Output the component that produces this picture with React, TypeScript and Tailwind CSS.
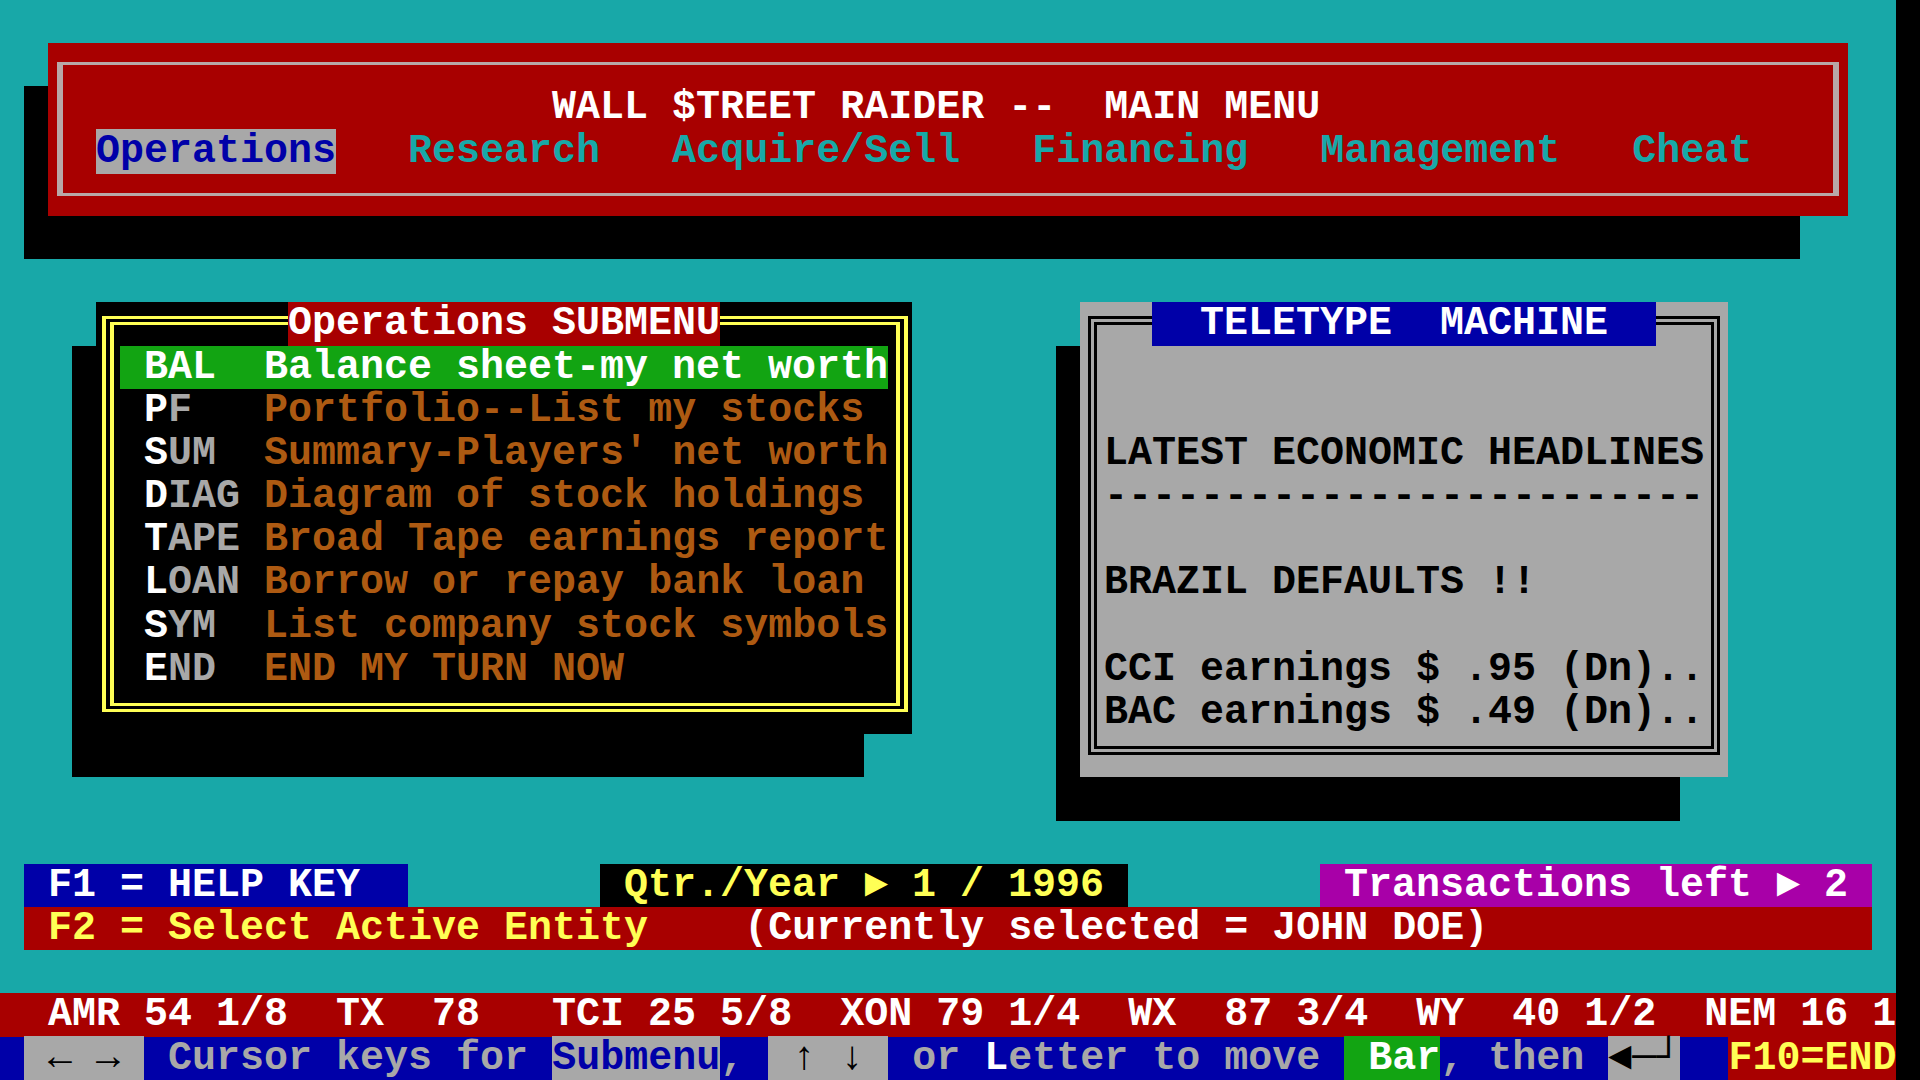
import React from "react";

// one text cell = 24px x 43.2px, screen is 79 cols x 25 rows
type Seg = [string, string];

function Line({ segs, className = "" }: { segs: Seg[]; className?: string }) {
  return (
    <div className={`whitespace-pre ${className}`}>
      {segs.map(([t, c], i) => (
        <span key={i} className={c}>
          {t}
        </span>
      ))}
    </div>
  );
}

const subItems: [string, string][] = [
  ["BAL", "Balance sheet-my net worth"],
  ["PF", "Portfolio--List my stocks"],
  ["SUM", "Summary-Players' net worth"],
  ["DIAG", "Diagram of stock holdings"],
  ["TAPE", "Broad Tape earnings report"],
  ["LOAN", "Borrow or repay bank loan"],
  ["SYM", "List company stock symbols"],
  ["END", "END MY TURN NOW"],
];

const headlines = [
  "LATEST ECONOMIC HEADLINES",
  "-------------------------",
  "",
  "BRAZIL DEFAULTS !!",
  "",
  "CCI earnings $ .95 (Dn)..",
  "BAC earnings $ .49 (Dn)..",
];

function MainMenu() {
  return (
    <>
      <div className="col-start-2 col-end-[76] row-start-3 row-end-7 bg-black" />
      <div className="col-start-3 col-end-[78] row-start-2 row-end-6 bg-[#a80000] grid grid-cols-[repeat(75,24px)] grid-rows-[repeat(4,43.2px)]">
        <div className="col-span-full row-span-full mt-[19px] mb-[20px] mx-[9px] border-x-[6px] border-y-[3px] border-[#b8a8a8]" />
        <div className="col-span-full row-start-2 whitespace-pre text-white">
          {"                     WALL $TREET RAIDER --  MAIN MENU"}
        </div>
        <Line
          className="col-span-full row-start-3 text-[#18a8a8]"
          segs={[
            ["  ", ""],
            ["Operations", "bg-[#a8a8a8] text-[#0000a8]"],
            ["   Research   Acquire/Sell   Financing   Management   Cheat", ""],
          ]}
        />
      </div>
    </>
  );
}

function SubMenu() {
  return (
    <>
      <div className="col-start-4 col-end-[37] row-start-9 row-end-[19] bg-black" />
      <div className="col-start-5 col-end-[39] row-start-8 row-end-[18] bg-black grid grid-cols-[repeat(34,24px)] grid-rows-[repeat(10,43.2px)]">
        <div className="col-span-full row-span-full mt-[14px] mb-[22px] ml-[6px] mr-[4px] border-double border-x-[12px] border-y-[9px] border-[#ffff55]" />
        <div className="col-start-9 col-end-[27] row-start-1 bg-[#a80000] text-white whitespace-pre">
          Operations SUBMENU
        </div>
        <div className="col-start-2 col-end-[34] row-start-2 row-end-[10] flex flex-col">
          {subItems.map(([code, desc], i) =>
            i === 0 ? (
              <div key={code} className="h-[43.2px] whitespace-pre bg-[#12a412] text-white">
                {` ${code.padEnd(4)} ${desc}`}
              </div>
            ) : (
              <Line
                key={code}
                className="h-[43.2px]"
                segs={[
                  [" ", ""],
                  [code[0], "text-white"],
                  [code.slice(1).padEnd(3), "text-[#a8a8a8]"],
                  [" ", ""],
                  [desc, "text-[#ad5a12]"],
                ]}
              />
            )
          )}
        </div>
      </div>
    </>
  );
}

function Teletype() {
  return (
    <>
      <div className="col-start-[45] col-end-[71] row-start-9 row-end-[20] bg-black" />
      <div className="col-start-[46] col-end-[73] row-start-8 row-end-[19] bg-[#a8a8a8] grid grid-cols-[repeat(27,24px)] grid-rows-[repeat(11,43.2px)]">
        <div className="col-span-full row-span-full mt-[14px] mb-[22px] mx-[8px] border-double border-[9px] border-black" />
        <div className="col-start-4 col-end-[25] row-start-1 bg-[#0000a8] text-white whitespace-pre">
          {"  TELETYPE  MACHINE  "}
        </div>
        <div className="col-start-2 col-end-[27] row-start-4 row-end-[11] flex flex-col text-black">
          {headlines.map((h, i) => (
            <div key={i} className="h-[43.2px] whitespace-pre">
              {h}
            </div>
          ))}
        </div>
      </div>
    </>
  );
}

function StatusRows() {
  return (
    <>
      <div className="col-start-2 col-end-[18] row-start-[21] bg-[#0000a8] text-white whitespace-pre">
        {" F1 = HELP KEY"}
      </div>
      <div className="col-start-[26] col-end-[48] row-start-[21] bg-black text-[#ffff55] whitespace-pre">
        {" Qtr./Year \u25BA 1 / 1996"}
      </div>
      <div className="col-start-[56] col-end-[79] row-start-[21] bg-[#a800a8] text-white whitespace-pre">
        {" Transactions left \u25BA 2"}
      </div>
      <Line
        className="col-start-2 col-end-[79] row-start-[22] bg-[#a80000]"
        segs={[
          [" ", ""],
          ["F2 = Select Active Entity", "text-[#ffff55]"],
          ["    ", ""],
          ["(Currently selected = JOHN DOE)", "text-white"],
        ]}
      />
      <div className="col-span-full row-start-[24] bg-[#a80000] text-white whitespace-pre">
        {"  AMR 54 1/8  TX  78   TCI 25 5/8  XON 79 1/4  WX  87 3/4  WY  40 1/2  NEM 16 1"}
      </div>
      <Line
        className="col-span-full row-start-[25] bg-[#0000a8] text-[#a8a8a8]"
        segs={[
          [" ", ""],
          [" \u2190 \u2192 ", "bg-[#a8a8a8] text-black"],
          [" Cursor keys for ", ""],
          ["Submenu", "bg-[#a8a8a8] text-[#0000a8]"],
          [", ", ""],
          [" \u2191 \u2193 ", "bg-[#a8a8a8] text-black"],
          [" or ", ""],
          ["L", "text-white"],
          ["etter to move ", ""],
          [" Bar", "bg-[#12a412] text-white"],
          [", then ", ""],
          ["\u25C4\u2500\u2518", "bg-[#a8a8a8] text-black"],
          ["  ", ""],
          ["F10=END", "bg-[#a80000] text-[#ffff55]"],
        ]}
      />
    </>
  );
}

export default function App() {
  return (
    <div className="w-[1920px] h-[1080px] bg-black flex overflow-hidden">
      <div className="w-[1896px] h-[1080px] bg-[#18a8a8] grid grid-cols-[repeat(79,24px)] grid-rows-[repeat(25,43.2px)] font-['Liberation_Mono','DejaVu_Sans_Mono',monospace] text-[40px] leading-[43.2px] font-bold">
        <MainMenu />
        <SubMenu />
        <Teletype />
        <StatusRows />
      </div>
    </div>
  );
}
